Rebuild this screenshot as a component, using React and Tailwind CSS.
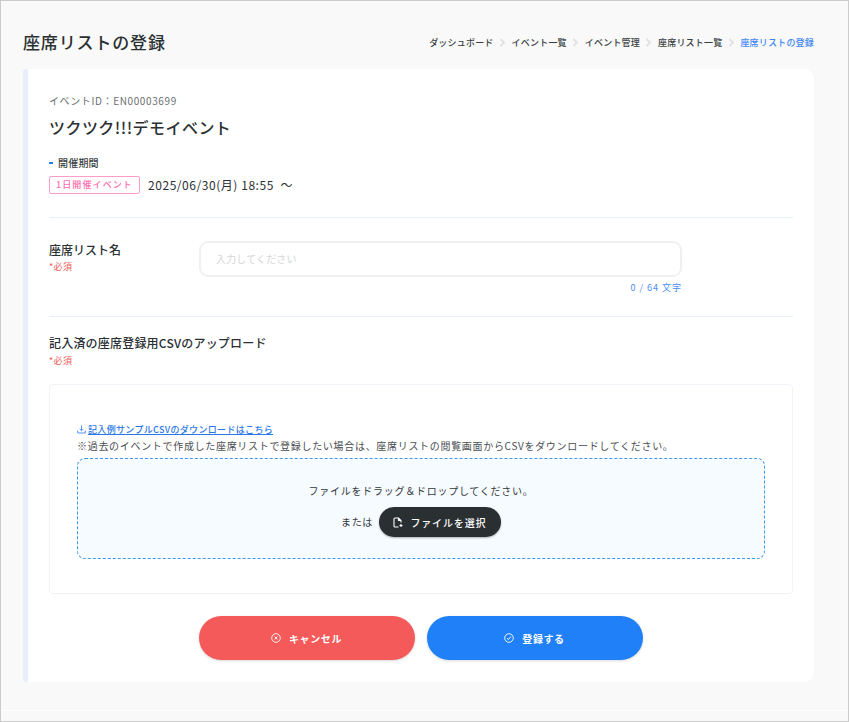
import React from "react";

const font = { fontFamily: '"Noto Sans CJK JP", "Noto Sans", sans-serif' };

function Chevron() {
  return (
    <svg width="7" height="9" viewBox="0 0 7 9" className="mx-[5.5px]" fill="none">
      <path d="M1.5 1 L5 4.5 L1.5 8" stroke="#e2e2e2" strokeWidth="2" />
    </svg>
  );
}

function Required() {
  return <div className="text-[9px] leading-[14px] text-[#f55a5a] tracking-[0.4px]">*必須</div>;
}

export default function App() {
  const crumbs = ["ダッシュボード", "イベント一覧", "イベント管理", "座席リスト一覧"];
  return (
    <div style={font} className="w-[849px] h-[722px] overflow-hidden bg-[#f9f9f9] border border-[#cccccc] text-[#2b3033] flex flex-col">
      <div className="flex items-center justify-between pl-[22px] pr-[34px] pt-[15px] h-[68px] shrink-0">
        <h1 className="text-[17px] leading-[28px] font-medium tracking-[0.85px] -mt-[1px]">座席リストの登録</h1>
        <nav className="flex items-center text-[9px] font-medium tracking-[0.2px] leading-[14px]">
          {crumbs.map((c) => (
            <React.Fragment key={c}>
              <span className="text-[#3a3f42]">{c}</span>
              <Chevron />
            </React.Fragment>
          ))}
          <span className="text-[#3f86f5]">座席リストの登録</span>
        </nav>
      </div>

      <main className="ml-[22px] mr-[34px] h-[613px] shrink-0 bg-white rounded-r-[10px] rounded-l-[3px] border-l-[5px] border-[#e6effb] pl-[21px] pr-[21px] pt-[24px]">
        <div className="text-[10px] leading-[15px] text-[#6b6f72] tracking-[0.62px]">イベントID：EN00003699</div>
        <div className="mt-[7px] text-[16px] leading-[24px] font-medium tracking-[0.45px]">ツクツク!!!デモイベント</div>
        <div className="mt-[16px] flex items-center text-[10px] leading-[15px] font-medium text-[#3a3f42] tracking-[0.2px]">
          <span className="w-[4px] h-[2px] bg-[#2080f8] mr-[5px]" />
          開催期間
        </div>
        <div className="mt-[6px] flex items-center">
          <span className="h-[18px] w-[91px] border-[1.5px] border-[#ff9cc8] rounded-[2px] flex items-center justify-center text-[9px] font-medium text-[#ff6fb0] tracking-[1.1px]">1日開催イベント</span>
          <span className="ml-[8px] -mt-[1px] text-[12px] leading-[18px] tracking-[0.55px]">2025/06/30(月) 18:55 &nbsp;〜</span>
        </div>
        <div className="mt-[23px] h-px bg-[#e9eff7]" />

        <div className="mt-[23px] flex">
          <div className="w-[150px] shrink-0">
            <div className="text-[12px] leading-[18px] font-medium tracking-[0px]">座席リスト名</div>
            <div className="mt-[1px]"><Required /></div>
          </div>
          <div className="w-[483px]">
            <div className="h-[36px] border-2 border-[#f0f0f0] rounded-[9px] flex items-center px-[15px] pb-[1px] text-[10px] text-[#d4d6d8] tracking-[0.15px]">入力してください</div>
            <div className="mt-[4px] text-right text-[9px] leading-[14px] text-[#4a8cf5] tracking-[1px]">0 / 64 文字</div>
          </div>
        </div>
        <div className="mt-[21px] h-px bg-[#e9eff7]" />

        <div className="mt-[17px] text-[12px] leading-[18px] font-medium tracking-[0.2px]">記入済の座席登録用CSVのアップロード</div>
        <div className="mt-[2px]"><Required /></div>

        <div className="mt-[16px] h-[210px] border border-[#f0f3f8] rounded-[4px] px-[27px] pt-[38px]">
          <div className="flex items-center text-[9px] leading-[14px] font-medium text-[#2a78e8] tracking-[0.33px]">
            <svg width="9" height="9" viewBox="0 0 9 9" fill="none" className="mr-[2px] -mt-[1px]" stroke="#3f86f5" strokeWidth="0.9">
              <path d="M4.5 0.5 V5.5 M2.6 3.8 L4.5 5.7 L6.4 3.8 M0.7 5.5 V8 H8.3 V5.5" />
            </svg>
            <span className="underline">記入例サンプルCSVのダウンロードはこちら</span>
          </div>
          <div className="mt-[1px] text-[10px] leading-[15px] text-[#4a4e52] tracking-[0.69px] whitespace-nowrap">※過去のイベントで作成した座席リストで登録したい場合は、座席リストの閲覧画面からCSVをダウンロードしてください。</div>
          <div className="mt-[5px] h-[101px] border border-dashed border-[#3f96f0] rounded-[8px] bg-[#f6fbff] flex flex-col items-center pt-[24px]">
            <div className="text-[10px] leading-[15px] text-[#33383b] tracking-[0.75px]">ファイルをドラッグ＆ドロップしてください。</div>
            <div className="mt-[8px] flex items-center">
              <span className="text-[10px] text-[#33383b] tracking-[0.6px] mr-[6px]">または</span>
              <div className="mt-[1px] h-[30px] w-[122px] rounded-full bg-[#2a2f32] shadow-[0_1px_2px_rgba(0,0,0,0.3)] flex items-center justify-center text-white text-[10px] font-medium tracking-[0.85px]">
                <svg width="10" height="11" viewBox="0 0 10 11" fill="none" stroke="#fff" strokeWidth="1.1" className="mr-[7px]">
                  <path d="M5.5 10 H2 Q1 10 1 9 V2 Q1 1 2 1 H5.5 L8 3.5 V5.5 M5.5 1 V3.5 H8 M8 7 V10 M6.5 8.5 H9.5" />
                </svg>
                ファイルを選択
              </div>
            </div>
          </div>
        </div>

        <div className="mt-[22px] flex justify-center gap-[12px] pr-[1px]">
          <button className="w-[216px] h-[44px] rounded-full bg-[#f55a5a] shadow-[0_1px_3px_rgba(0,0,0,0.15)] text-white text-[10px] font-bold tracking-[0.6px] flex items-center justify-center">
            <svg width="10" height="10" viewBox="0 0 10 10" fill="none" stroke="#fff" strokeWidth="0.9" className="mr-[8px]">
              <circle cx="5" cy="5" r="4.3" />
              <path d="M3.5 3.5 L6.5 6.5 M6.5 3.5 L3.5 6.5" />
            </svg>
            キャンセル
          </button>
          <button className="w-[216px] h-[44px] rounded-full bg-[#2080f8] shadow-[0_1px_3px_rgba(0,0,0,0.15)] text-white text-[10px] font-bold tracking-[0.6px] flex items-center justify-center">
            <svg width="10" height="10" viewBox="0 0 10 10" fill="none" stroke="#fff" strokeWidth="0.9" className="mr-[8px]">
              <circle cx="5" cy="5" r="4.3" />
              <path d="M3 5.2 L4.5 6.5 L7 3.5" />
            </svg>
            登録する
          </button>
        </div>
      </main>
      <div className="mt-[28px] h-px bg-white" />
    </div>
  );
}
